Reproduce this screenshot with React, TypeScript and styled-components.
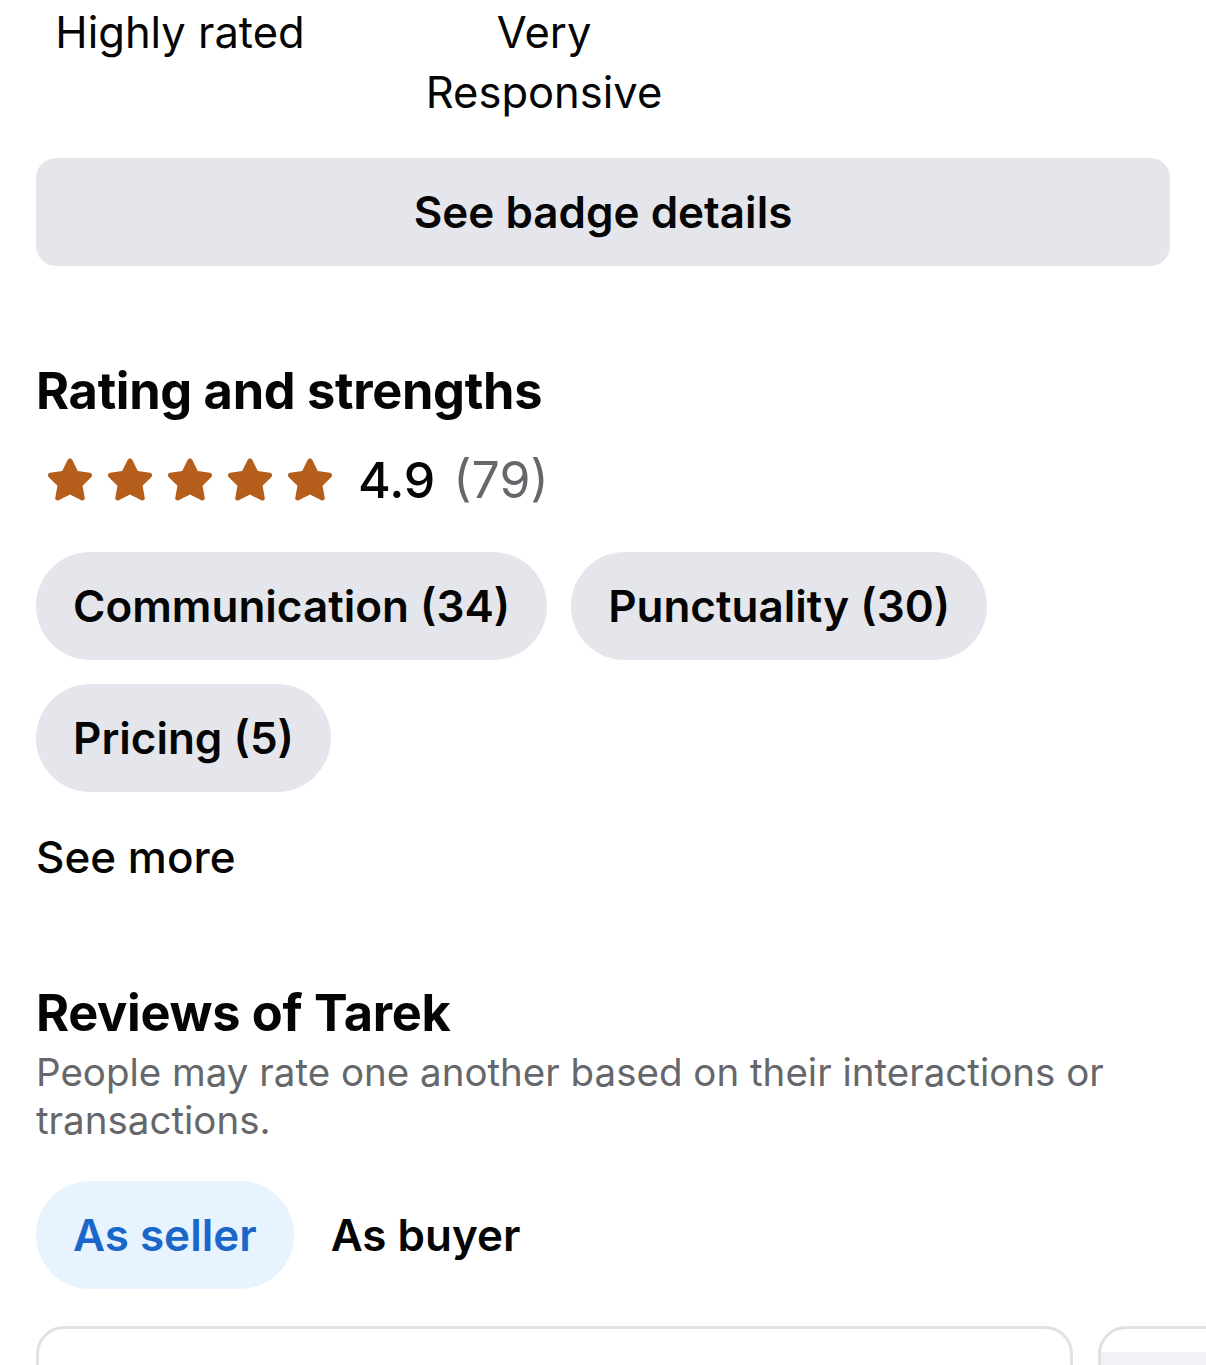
import React, { FC } from 'react'
import styled, { createGlobalStyle } from 'styled-components'

const GlobalStyle = createGlobalStyle`
  html, body {
    margin: 0;
    padding: 0;
    background: #fff;
  }
  body {
    font-family: Inter, 'Noto Sans', Roboto, sans-serif;
    color: #050505;
    -webkit-font-smoothing: antialiased;
  }
`

const badges = ['Highly rated', 'Very Responsive']
const strengths = ['Communication (34)', 'Punctuality (30)', 'Pricing (5)']

const Star: FC = () => (
  <svg width="52" height="50" viewBox="0 0 24 23">
    <path
      d="M12 1.6c.5 0 .9.3 1.1.7l2.5 5.1 5.6.8c.9.1 1.3 1.3.7 1.9l-4.1 4 1 5.6c.2.9-.8 1.6-1.6 1.2L12 18.2l-5.2 2.7c-.8.4-1.8-.3-1.600-1.2l1-5.6-4.1-4c-.6-.6-.2-1.8.7-1.9l5.6-.8 2.5-5.1c.2-.4.6-.7 1.1-.7z"
      fill="#b55e1c"
    />
  </svg>
)

const App: FC = () => {
  return (
    <>
      <GlobalStyle />
      <Page>
        <BadgeRow>
          {badges.map((b) => (
            <Badge key={b}>{b}</Badge>
          ))}
        </BadgeRow>
        <GreyButton>See badge details</GreyButton>

        <RatingSection>
          <Heading>Rating and strengths</Heading>
          <RatingRow>
            <Stars>
              {[0, 1, 2, 3, 4].map((i) => (
                <Star key={i} />
              ))}
            </Stars>
            <Score>4.9</Score>
            <Count>(79)</Count>
          </RatingRow>
          <Chips>
            {strengths.map((s) => (
              <Chip key={s}>{s}</Chip>
            ))}
          </Chips>
          <SeeMore>See more</SeeMore>
        </RatingSection>

        <ReviewsSection>
          <Heading>Reviews of Tarek</Heading>
          <Subtext>People may rate one another based on their interactions or transactions.</Subtext>
          <Tabs>
            <Tab $active>As seller</Tab>
            <Tab>As buyer</Tab>
          </Tabs>
        </ReviewsSection>

        <CardStrip>
          <ReviewCard />
          <ReviewCard>
            <CardFill />
          </ReviewCard>
        </CardStrip>
      </Page>
    </>
  )
}

export default App

const Page = styled.div`
  width: 1206px;
  height: 1365px;
  overflow: hidden;
  padding: 0 36px;
  box-sizing: border-box;
`

const BadgeRow = styled.div`
  display: grid;
  grid-template-columns: 288px 300px;
  column-gap: 70px;
  padding-top: 2px;
`

const Badge = styled.div`
  font-size: 43.5px;
  line-height: 60px;
  text-align: center;
  color: #050505;
`

const GreyButton = styled.div`
  margin-top: 36px;
  height: 108px;
  border-radius: 20px;
  background: #e4e6eb;
  display: flex;
  align-items: center;
  justify-content: center;
  font-size: 44px;
  font-weight: 600;
  color: #050505;
`

const RatingSection = styled.section`
  margin-top: 96px;
`

const ReviewsSection = styled.section`
  margin-top: 102px;
`

const Heading = styled.h2`
  margin: 0;
  font-size: 50.5px;
  line-height: 58px;
  font-weight: 700;
  letter-spacing: -0.3px;
  color: #050505;
`

const RatingRow = styled.div`
  display: flex;
  align-items: center;
  margin-top: 30px;
  height: 60px;
`

const Stars = styled.div`
  display: flex;
  gap: 8px;
  margin-left: 8px;
  margin-right: 22px;
`

const Score = styled.span`
  font-size: 50px;
  font-weight: 500;
  color: #050505;
  margin-right: 18px;
`

const Count = styled.span`
  font-size: 50px;
  color: #65676b;
`

const Chips = styled.div`
  display: flex;
  flex-wrap: wrap;
  gap: 24px 24px;
  margin-top: 42px;
`

const Chip = styled.div`
  height: 108px;
  padding: 0 37px;
  border-radius: 54px;
  background: #e4e6eb;
  display: flex;
  align-items: center;
  font-size: 44px;
  font-weight: 600;
  color: #050505;
`

const SeeMore = styled.div`
  margin-top: 40px;
  font-size: 44px;
  line-height: 50px;
  font-weight: 500;
  color: #050505;
`

const Subtext = styled.p`
  margin: 6px 0 0;
  font-size: 38.5px;
  line-height: 48px;
  color: #65676b;
  max-width: 1100px;
`

const Tabs = styled.div`
  display: flex;
  align-items: center;
  gap: 0;
  margin-top: 37px;
`

const Tab = styled.div<{ $active?: boolean }>`
  height: 108px;
  padding: 0 37px;
  border-radius: 54px;
  display: flex;
  align-items: center;
  font-size: 44px;
  font-weight: 600;
  background: ${(p) => (p.$active ? '#e7f3ff' : 'transparent')};
  color: ${(p) => (p.$active ? '#1b66c9' : '#050505')};
`

const CardStrip = styled.div`
  display: flex;
  gap: 25px;
  margin-top: 37px;
  margin-right: -36px;
  overflow: hidden;
`

const ReviewCard = styled.div`
  flex: 0 0 1037px;
  height: 120px;
  box-sizing: border-box;
  border: 3px solid #dfe1e4;
  border-radius: 28px;
  padding-top: 23px;
  overflow: hidden;
`

const CardFill = styled.div`
  height: 100%;
  background: #f0f2f5;
`
